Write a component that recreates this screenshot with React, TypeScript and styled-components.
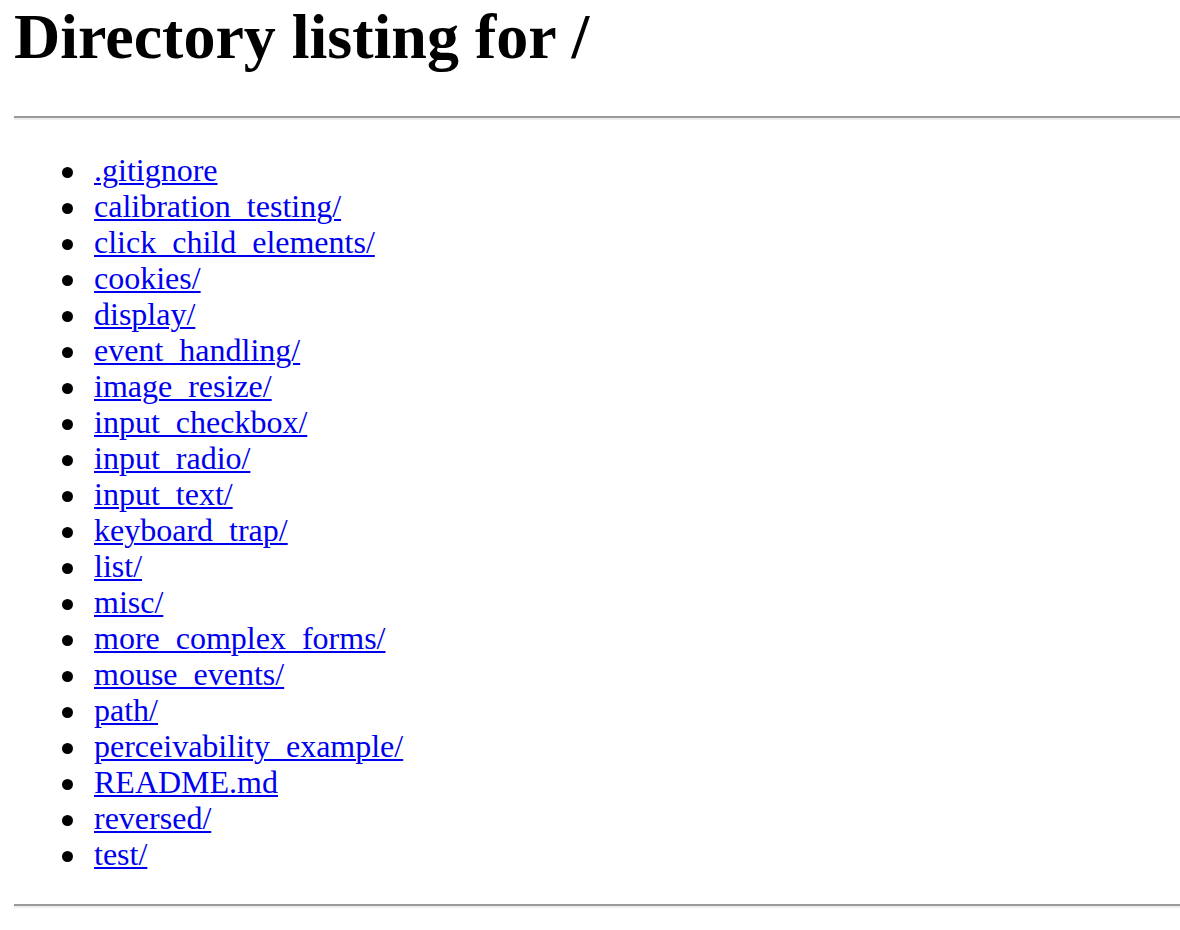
import React from 'react';
import styled, { createGlobalStyle } from 'styled-components';

const GlobalStyle = createGlobalStyle`
  html, body {
    margin: 0;
    padding: 0;
    background: #fff;
  }
  body {
    padding-left: 14px;
    font-family: "Liberation Serif", "Times New Roman", serif;
    color: #000;
  }
`

const Title = styled.h1`
  margin: 0 0 46px;
  padding-top: 4px;
  font-size: 64px;
  line-height: 66px;
  font-weight: bold;
`

const Rule = styled.hr`
  margin: 0;
  height: 0;
  border: none;
  border-top: 2px solid #9a9a9a;
  border-bottom: 2px solid #eeeeee;
`

const Listing = styled.ul`
  margin: 32px 0;
  padding-left: 80px;
  list-style: none;
  font-size: 32px;
  line-height: 36px;
`

const Item = styled.li`
  &::before {
    content: '';
    display: inline-block;
    width: 11px;
    height: 11px;
    border-radius: 50%;
    background: #000;
    margin-left: -32px;
    margin-right: 21px;
    vertical-align: 3px;
  }
`

const Entry = styled.a`
  color: #0000ee;
  text-decoration: underline;
  text-decoration-thickness: 2px;
  text-underline-offset: 2px;
`

const entries = [
  '.gitignore',
  'calibration_testing/',
  'click_child_elements/',
  'cookies/',
  'display/',
  'event_handling/',
  'image_resize/',
  'input_checkbox/',
  'input_radio/',
  'input_text/',
  'keyboard_trap/',
  'list/',
  'misc/',
  'more_complex_forms/',
  'mouse_events/',
  'path/',
  'perceivability_example/',
  'README.md',
  'reversed/',
  'test/',
];

export default function App() {
  return <>
    <GlobalStyle />
    <Title>Directory listing for /</Title>
    <Rule />
    <Listing>
      {entries.map((name) => <Item key={name}>
        <Entry href={name}>{name}</Entry>
      </Item>)}
    </Listing>
    <Rule />
  </>
}
